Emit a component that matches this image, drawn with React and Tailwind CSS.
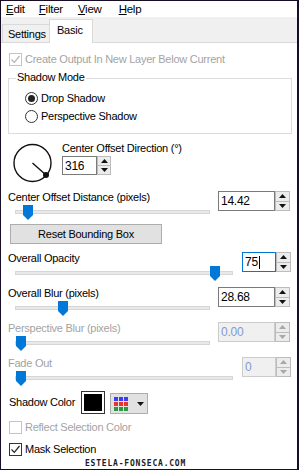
/* Drop Shadow dialog - Basic tab */

const MENU = ['Edit', 'Filter', 'View', 'Help']

function Check({ checked, disabled }) {
  return (
    <span className={`w-[13px] h-[13px] border bg-white flex items-center justify-center shrink-0 ${disabled ? 'border-[#c4c4c4]' : 'border-[#333333]'}`}>
      {checked && (
        <svg width="11" height="11" viewBox="0 0 11 11">
          <path d="M1.5 5.5 L4.3 8.3 L9.5 2" fill="none" stroke={disabled ? '#b4b4b4' : '#222'} strokeWidth="1.2" />
        </svg>
      )}
    </span>
  )
}

function Radio({ on }) {
  return (
    <span className="w-[13px] h-[13px] rounded-full border border-[#333333] bg-white flex items-center justify-center shrink-0">
      {on && <span className="w-[7px] h-[7px] rounded-full bg-[#222222]" />}
    </span>
  )
}

function Spin({ value, width, disabled, focused }) {
  const box = focused ? 'border-[#0078d7]' : disabled ? 'border-[#cccccc] bg-[#f0f0f0]' : 'border-[#7a7a7a]'
  return (
    <div className="flex h-[20px]">
      <div className={`border ${box} h-full flex items-center pl-[2px] text-[12px] ${disabled ? 'text-[#7f9bd0]' : 'text-black'}`} style={{ width }}>
        {value}
        {focused && <span className="w-px h-[13px] bg-black ml-[1px]" />}
      </div>
      <div className="flex flex-col w-[15px] h-full">
        <SpinBtn up disabled={disabled} />
        <SpinBtn disabled={disabled} />
      </div>
    </div>
  )
}

function SpinBtn({ up, disabled }) {
  return (
    <div className={`flex-1 border border-[#bcbcbc] ${up ? '' : 'border-t-0'} bg-[#ececec] flex items-center justify-center`}>
      <svg width="7" height="4" viewBox="0 0 7 4">
        <path d={up ? 'M0 4 L3.5 0 L7 4 Z' : 'M0 0 L3.5 4 L7 0 Z'} fill={disabled ? '#a8a8a8' : '#111'} />
      </svg>
    </div>
  )
}

function SliderRow({ label, value, wide, thumb, disabled, focused, className }) {
  const left = wide ? 210 : 234
  const track = wide ? 195 : 218
  return (
    <div className={`flex h-[30px] shrink-0 ${className}`}>
      <div className="flex flex-col" style={{ width: left }}>
        <span className={`leading-[14px] h-[14px] whitespace-nowrap ${disabled ? 'text-[#a3a3a3]' : 'text-black'}`}>{label}</span>
        <div className="relative h-[16px] ml-[7px]" style={{ width: track }}>
          <div className="mt-[6px] h-[4px] bg-[#e7eaea] border border-[#d6d6d6]" />
          <svg className="absolute top-[1px]" style={{ left: thumb }} width="10" height="15" viewBox="0 0 10 15">
            <path d="M0 0 H10 V10 L5 15 L0 10 Z" fill="#0078d7" />
          </svg>
        </div>
      </div>
      <div className="mt-[1px]">
        <Spin value={value} width={wide ? 57 : 34} disabled={disabled} focused={focused} />
      </div>
    </div>
  )
}

function Dial() {
  return (
    <svg width="40" height="40" viewBox="0 0 40 40" className="ml-[5px] mt-[1px] shrink-0">
      <circle cx="19.5" cy="20" r="18.5" fill="white" stroke="#111" strokeWidth="1.4" />
      <line x1="19.5" y1="20" x2="33" y2="32" stroke="#111" strokeWidth="1.4" />
      <circle cx="33" cy="32" r="3" fill="#111" />
    </svg>
  )
}

function ColorGrid() {
  const rows = ['#3d3df2', '#ea3226', '#2c9a3c']
  return (
    <div className="flex flex-col gap-px">
      {rows.map(c => (
        <div key={c} className="flex gap-px">
          {[0, 1, 2].map(i => <span key={i} className="w-[4px] h-[4px]" style={{ background: c }} />)}
        </div>
      ))}
    </div>
  )
}

export default function App() {
  return (
    <div className="w-[299px] h-[471px] bg-white text-[11px] tracking-[-0.25px] text-black" style={{ fontFamily: '"Liberation Sans", Arial, sans-serif' }}>
      <div className="w-[299px] h-[470px] border-t border-l border-r-2 border-b border-[#170d27] flex flex-col overflow-hidden">
        {/* menu bar */}
        <div className="h-[16px] flex items-center pl-[5px] shrink-0 text-[11.5px]">
          {MENU.map((m, i) => (
            <span key={m} className={`leading-[14px] ${['', 'ml-[14px]', 'ml-[15px]', 'ml-[17px]'][i]}`}>
              <span className="underline underline-offset-[1px]">{m[0]}</span>{m.slice(1)}
            </span>
          ))}
        </div>

        {/* tabs */}
        <div className="h-[26px] bg-[#f0f0f0] border-b border-[#d9d9d9] flex items-end pl-[1px] shrink-0">
          <div className="h-[18px] w-[47px] border-t border-l border-[#d9d9d9] flex items-center pl-[5px] leading-[14px]">Settings</div>
          <div className="h-[24px] w-[44px] -mb-px bg-white border-t border-l border-r border-[#d9d9d9] flex items-center pl-[7px] pb-[3px] leading-[14px]">Basic</div>
        </div>

        {/* panel */}
        <div className="flex-1 bg-white pl-[7px] pt-[7px] flex flex-col">
          <div className="h-[18px] flex items-center gap-[3px] pl-[1px] text-[#a3a3a3] shrink-0">
            <Check checked disabled />
            <span>Create Output In New Layer Below Current</span>
          </div>

          <div className="relative mt-[10px] w-[284px] h-[56px] border border-[#dcdcdc] pl-[16px] pt-[10px] shrink-0">
            <span className="absolute top-[-9px] left-[7px] bg-white px-[1px] leading-[14px]">Shadow Mode</span>
            <div className="h-[18px] flex items-center gap-[3px]">
              <Radio on />
              <span>Drop Shadow</span>
            </div>
            <div className="h-[18px] flex items-center gap-[3px]">
              <Radio />
              <span>Perspective Shadow</span>
            </div>
          </div>

          <div className="flex mt-[8px] shrink-0">
            <Dial />
            <div className="ml-[9px] flex flex-col">
              <span className="leading-[12px]">Center Offset Direction (°)</span>
              <div className="mt-[2px] flex h-[19px]">
                <div className="w-[35px] border border-[#7a7a7a] flex items-center pl-[2px] text-[12px]">316</div>
                <div className="flex flex-col w-[14px]">
                  <SpinBtn up />
                  <SpinBtn />
                </div>
              </div>
            </div>
          </div>

          <SliderRow className="mt-[7px]" label="Center Offset Distance (pixels)" value="14.42" wide thumb={8} />

          <div className="mt-[4px] ml-[2px] w-[152px] h-[20px] bg-[#e1e1e1] border border-[#adadad] flex items-center justify-center shrink-0">
            Reset Bounding Box
          </div>

          <SliderRow className="mt-[7px]" label="Overall Opacity" value="75" thumb={195} focused />
          <SliderRow className="mt-[5px]" label="Overall Blur (pixels)" value="28.68" wide thumb={43} />
          <SliderRow className="mt-[5px]" label="Perspective Blur (pixels)" value="0.00" wide thumb={1} disabled />
          <SliderRow className="mt-[5px]" label="Fade Out" value="0" thumb={1} disabled />

          <div className="mt-[5px] h-[23px] flex items-center shrink-0">
            <span className="w-[73px] pl-[1px] whitespace-nowrap">Shadow Color</span>
            <div className="w-[24px] h-[23px] border border-[#333] bg-white p-[2px]">
              <div className="w-full h-full bg-black" />
            </div>
            <div className="ml-[5px] w-[38px] h-[21px] mt-[2px] bg-[#e1e1e1] border border-[#adadad] flex items-center pl-[3px] gap-[9px]">
              <ColorGrid />
              <svg width="7" height="4" viewBox="0 0 7 4"><path d="M0 0 L3.5 4 L7 0 Z" fill="#111" /></svg>
            </div>
          </div>

          <div className="mt-[4px] h-[18px] flex items-center gap-[3px] pl-[1px] text-[#a3a3a3] shrink-0">
            <Check disabled />
            <span>Reflect Selection Color</span>
          </div>
          <div className="mt-[4px] h-[18px] flex items-center gap-[3px] pl-[1px] shrink-0">
            <Check checked />
            <span>Mask Selection</span>
          </div>

          <div className="mt-[2px] ml-[77px] leading-[8px] text-[8px] font-bold tracking-[0.8px] text-[#1b1b2b]" style={{ fontFamily: '"DejaVu Sans Mono", monospace' }}>
            ESTELA-FONSECA.COM
          </div>
        </div>
      </div>
    </div>
  )
}
